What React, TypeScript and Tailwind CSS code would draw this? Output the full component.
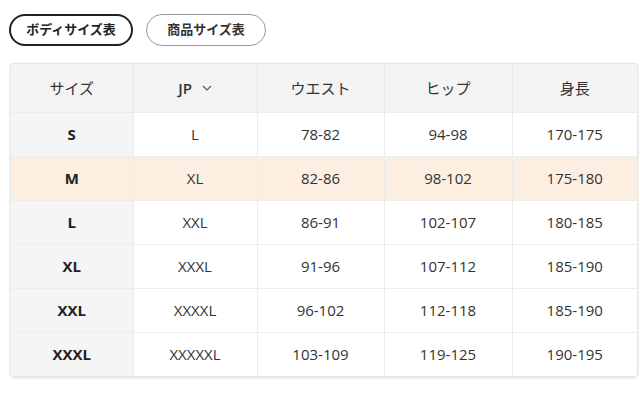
import React from 'react';

const font = { fontFamily: '"Open Sans", "Noto Sans CJK JP", sans-serif' };

const headers = ['サイズ', 'JP', 'ウエスト', 'ヒップ', '身長'];

// size chart rows
const rows = [
  ['S', 'L', '78-82', '94-98', '170-175'],
  ['M', 'XL', '82-86', '98-102', '175-180'],
  ['L', 'XXL', '86-91', '102-107', '180-185'],
  ['XL', 'XXXL', '91-96', '107-112', '185-190'],
  ['XXL', 'XXXXL', '96-102', '112-118', '185-190'],
  ['XXXL', 'XXXXXL', '103-109', '119-125', '190-195'],
];

const App: React.FC = () => {
  return (
    <div className="w-[640px] h-[406px] bg-white text-[#333]" style={font}>
      {/* Tabs */}
      <div className="flex gap-[13px] pl-[9px] pt-[14px]">
        <button className="h-[32px] w-[124px] rounded-full border-2 border-[#222] text-[13px] font-semibold text-[#222]">
          ボディサイズ表
        </button>
        <button className="h-[32px] w-[120px] rounded-full border border-[#999] text-[13px] font-semibold text-[#333]">
          商品サイズ表
        </button>
      </div>

      {/* Chart */}
      <div className="ml-[10px] mt-[17px] w-[628px] rounded-[3px] border border-[#e6e6e6] shadow-[0_1px_3px_rgba(0,0,0,0.12)] overflow-hidden">
        <table className="w-full table-fixed border-collapse text-[15px]">
          <colgroup>
            <col className="w-[122px]" />
            <col className="w-[124px]" />
            <col className="w-[127px]" />
            <col className="w-[128px]" />
            <col />
          </colgroup>
          <thead>
            <tr className="h-[48px] bg-[#f4f4f4]">
              {headers.map((h, i) => (
                <th key={h} className={`font-normal text-center ${i > 0 ? 'border-l border-[#e8e8e8]' : ''}`}>
                  {h === 'JP' ? (
                    <span className="inline-flex items-center gap-[10px] font-semibold">
                      JP
                      <svg width="10" height="6" viewBox="0 0 10 6" fill="none">
                        <path d="M1 1l4 4 4-4" stroke="#555" strokeWidth="1.2" />
                      </svg>
                    </span>
                  ) : (
                    h
                  )}
                </th>
              ))}
            </tr>
          </thead>
          <tbody>
            {rows.map((r) => {
              const hi = r[0] === 'M';
              return (
                <tr key={r[0]} className={`h-[44px] border-t border-[#ececec] ${hi ? 'bg-[#fdeee2]' : ''}`}>
                  {r.map((c, i) => (
                    <td
                      key={i}
                      className={`text-center ${
                        i === 0 ? `font-bold text-[#222] ${hi ? '' : 'bg-[#f5f5f5]'}` : 'border-l border-[#ececec]'
                      }`}
                    >
                      {c}
                    </td>
                  ))}
                </tr>
              );
            })}
          </tbody>
        </table>
      </div>
    </div>
  );
};

export default App;
